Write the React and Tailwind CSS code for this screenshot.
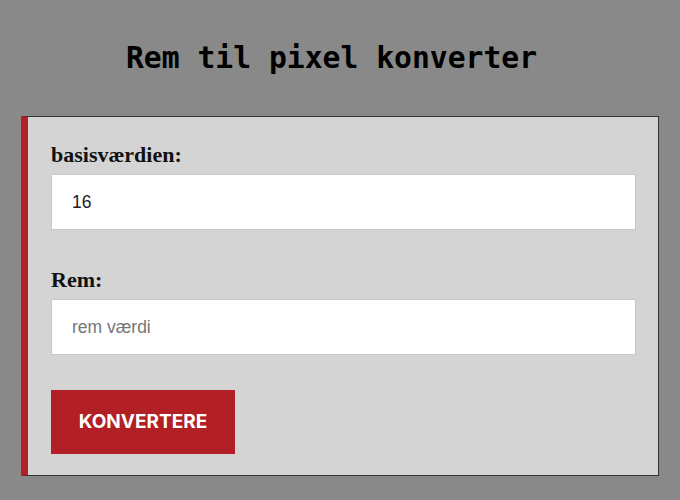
export default function App() {
  return (
    <div className="min-h-[500px] w-[680px] bg-[#898989] pt-[40px]">
      <h1 className="text-center font-['DejaVu_Sans_Mono',monospace] text-[29.7px] font-bold leading-[36px] text-black pr-[17px]">
        Rem til pixel konverter
      </h1>
      <div className="mx-[21px] mt-[40px] flex h-[360px] flex-col items-start border border-l-[7px] border-[#333333] border-l-[#b21f24] bg-[#d4d4d4] pl-[23px] pr-[22px] pt-[26px]">
        <label className="block font-['Liberation_Serif',serif] text-[22px] font-bold leading-[24px] text-[#111]">
          basisværdien:
        </label>
        <input
          className="mt-[7px] block h-[56px] w-full border border-[#c8c8c8] bg-white px-[20px] font-['Liberation_Sans',Arial,sans-serif] text-[17.5px] text-[#222] outline-none"
          defaultValue="16"
        />
        <label className="mt-[38px] block font-['Liberation_Serif',serif] text-[22px] font-bold leading-[24px] text-[#111]">
          Rem:
        </label>
        <input
          className="mt-[7px] block h-[56px] w-full border border-[#c8c8c8] bg-white px-[20px] font-['Liberation_Sans',Arial,sans-serif] text-[17.5px] text-[#222] outline-none placeholder:text-[#757575]"
          placeholder="rem værdi"
        />
        <button className="mt-[35px] block h-[64px] w-[184px] bg-[#b21f24] font-['Inter','Liberation_Sans',sans-serif] text-[19px] font-bold text-white">
          KONVERTERE
        </button>
      </div>
    </div>
  );
}
